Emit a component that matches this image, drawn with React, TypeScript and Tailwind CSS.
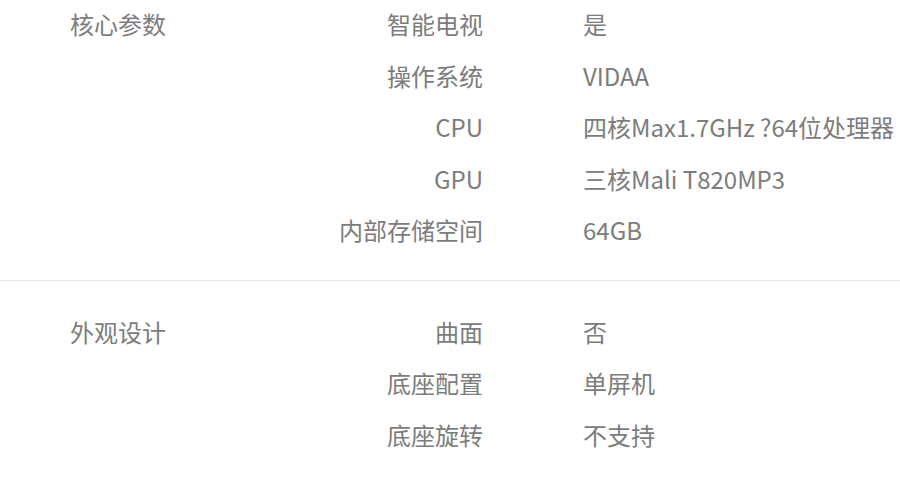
const sections = [
  {
    title: '核心参数',
    rows: [
      ['智能电视', '是'],
      ['操作系统', 'VIDAA'],
      ['CPU', '四核Max1.7GHz ?64位处理器'],
      ['GPU', '三核Mali T820MP3'],
      ['内部存储空间', '64GB'],
    ],
  },
  {
    title: '外观设计',
    rows: [
      ['曲面', '否'],
      ['底座配置', '单屏机'],
      ['底座旋转', '不支持'],
    ],
  },
];

export default function App() {
  return (
    <div
      className="w-[900px] h-[483px] overflow-hidden bg-white text-[#7c7c7c] text-[24px]"
      style={{ fontFamily: '"Noto Sans CJK SC", "Noto Sans", sans-serif' }}
    >
      <div className="-mt-[2px]">
        {sections.map((s, i) => (
          <div
            key={s.title}
            className={i === 0 ? 'pb-[24px] border-b border-[#e6e6e6]' : 'pt-[25px]'}
          >
            {s.rows.map(([label, value], j) => (
              <div key={label} className="flex leading-[51.5px] h-[51.5px]">
                <div className="w-[220px] pl-[70px]">{j === 0 ? s.title : ''}</div>
                <div className="w-[263px] text-right">{label}</div>
                <div className="pl-[100px] whitespace-nowrap">{value}</div>
              </div>
            ))}
          </div>
        ))}
      </div>
    </div>
  );
}
